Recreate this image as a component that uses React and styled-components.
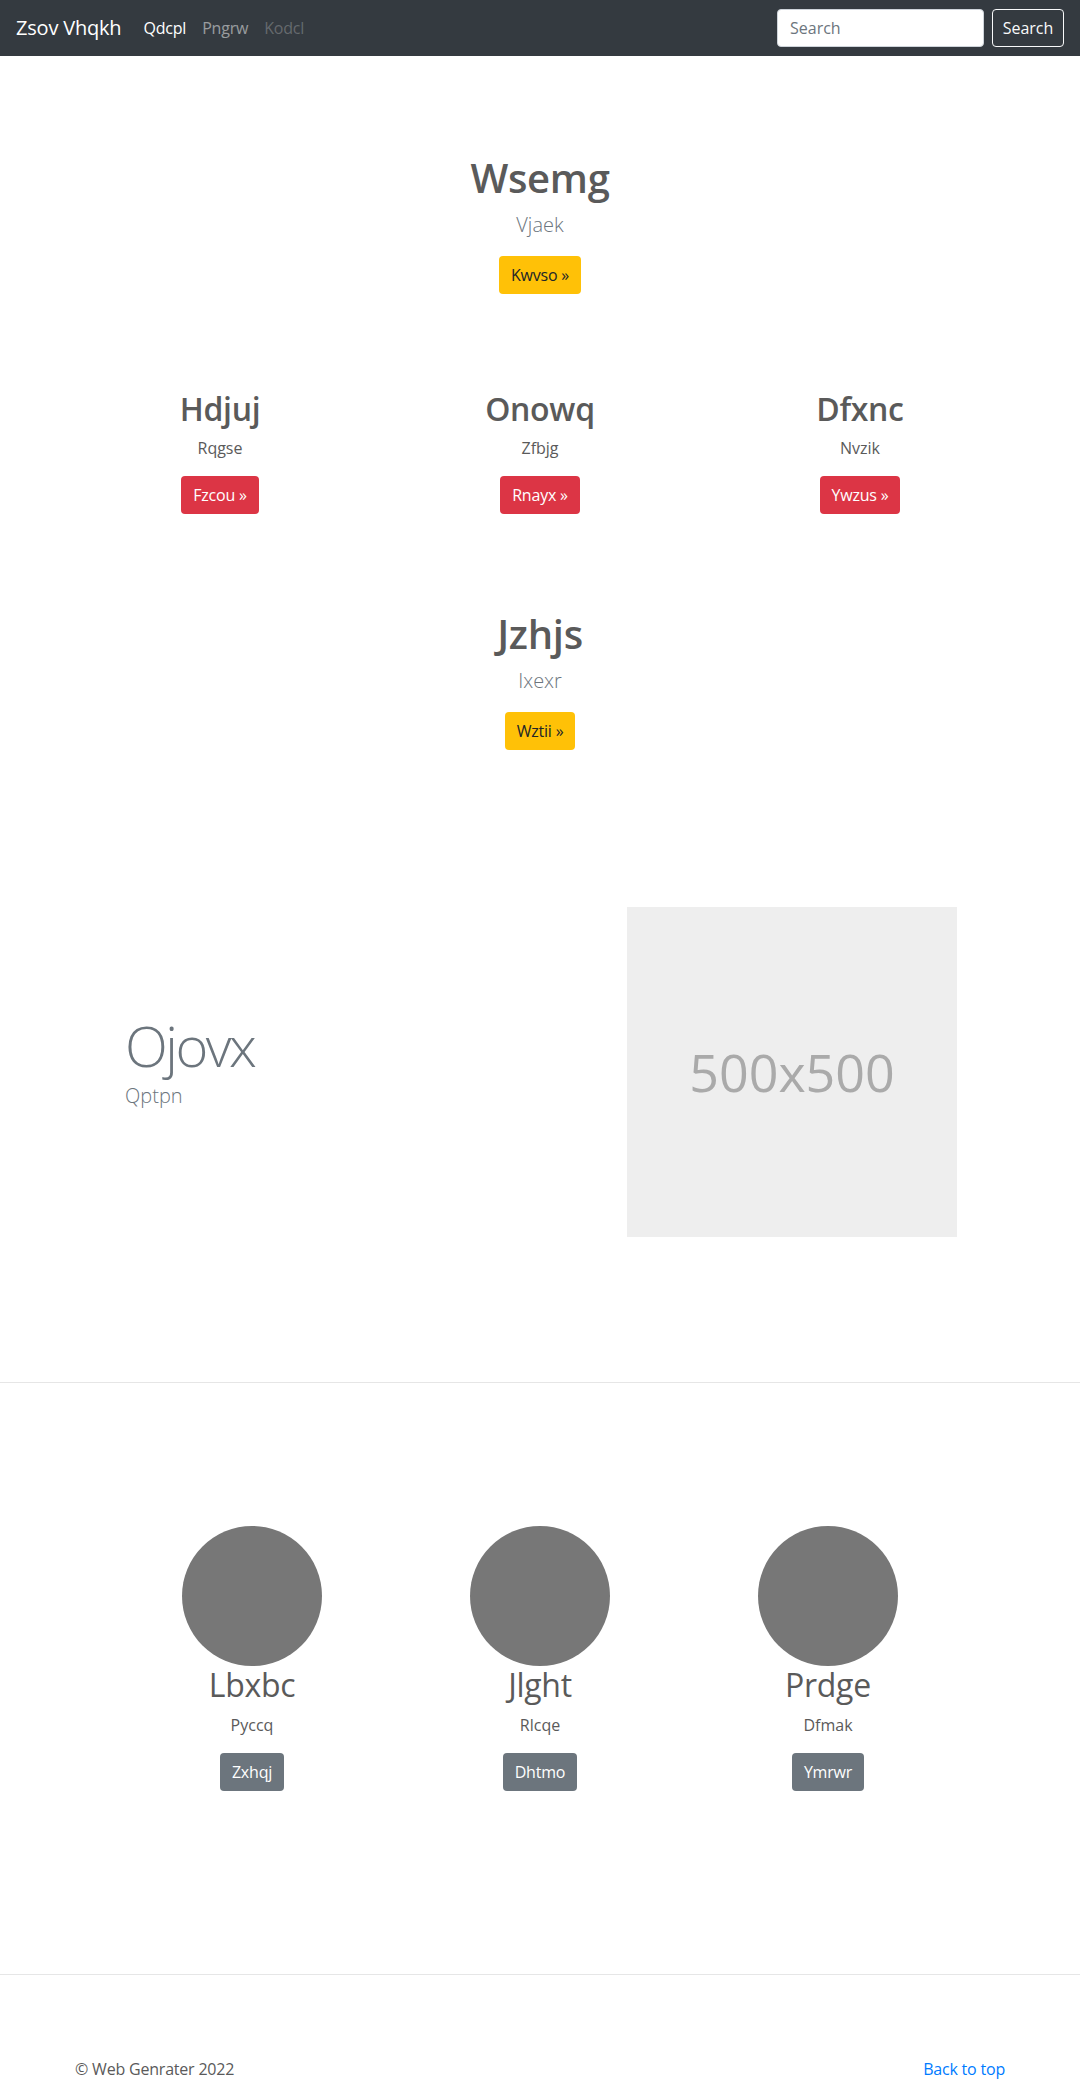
import React from 'react'
import styled, { createGlobalStyle } from 'styled-components'

const GlobalStyle = createGlobalStyle`
  * { box-sizing: border-box; }
  body {
    margin: 0;
    font-family: "Open Sans", "Noto Sans", sans-serif;
    font-size: 16px;
    line-height: 1.5;
    color: #5a5a5a;
    background: #fff;
  }
`

const Navbar = styled.nav`
  height: 56px;
  background-color: #343a40;
  display: flex;
  align-items: center;
  padding: 8px 16px;
`

const Brand = styled.a`
  font-size: 20px;
  line-height: 30px;
  color: #fff;
  margin-right: 14px;
  letter-spacing: -0.2px;
  text-decoration: none;
`

const NavLinks = styled.div`
  display: flex;
  flex: 1;
`

const NavLink = styled.a`
  padding: 8px;
  font-size: 16px;
  line-height: 24px;
  letter-spacing: -0.2px;
  text-decoration: none;
  color: ${(p) =>
    p.$state === 'active'
      ? '#fff'
      : p.$state === 'disabled'
      ? 'rgba(255,255,255,.25)'
      : 'rgba(255,255,255,.5)'};
`

const SearchForm = styled.form`
  display: flex;
  gap: 8px;
`

const SearchInput = styled.input`
  width: 207px;
  height: 38px;
  padding: 6px 12px;
  font-family: inherit;
  font-size: 16px;
  color: #495057;
  border: 1px solid #ced4da;
  border-radius: 4px;
  outline: none;
  &::placeholder { color: #6c757d; }
`

const OutlineButton = styled.button`
  height: 38px;
  width: 72px;
  padding: 6px 0;
  font-family: inherit;
  font-size: 16px;
  color: #f8f9fa;
  background: transparent;
  border: 1px solid #f8f9fa;
  border-radius: 4px;
`

const Main = styled.main`
  padding-top: 50px;
`

const Block = styled.section`
  padding: 48px 0;
  text-align: center;
`

const Container = styled.div`
  width: 960px;
  margin: 0 auto;
  padding: 0 ${(p) => p.$pad ?? 15}px;
`

const Heading = styled.h1`
  margin: 0 0 8px;
  font-size: ${(p) => p.$size || 40}px;
  font-weight: ${(p) => p.$weight || 600};
  line-height: 1.2;
  letter-spacing: -0.3px;
  color: #5a5a5a;
`

const Lead = styled.p`
  margin: 0 0 16px;
  font-size: 20px;
  font-weight: 300;
  color: #6c757d;
`

const Text = styled.p`
  margin: 0 0 16px;
`

const variants = {
  warning: { bg: '#ffc107', fg: '#212529' },
  danger: { bg: '#dc3545', fg: '#fff' },
  secondary: { bg: '#6c757d', fg: '#fff' },
}

const Button = styled.a`
  display: inline-block;
  padding: 7px 12px;
  font-size: 16px;
  line-height: 24px;
  letter-spacing: -0.2px;
  border-radius: 4px;
  text-decoration: none;
  background-color: ${(p) => variants[p.$variant].bg};
  color: ${(p) => variants[p.$variant].fg};
`

const ThreeCols = styled.div`
  display: grid;
  grid-template-columns: repeat(3, 1fr);
`

const Col = styled.div`
  text-align: center;
`

const Featurette = styled.section`
  padding: 109px 0 145px;
`

const FeatRow = styled.div`
  display: grid;
  grid-template-columns: 560px 400px;
  align-items: center;
`

const FeatText = styled.div`
  padding-left: 65px;
`

const FeatHeading = styled.h2`
  margin: 0 0 8px;
  font-size: 56px;
  font-weight: 300;
  line-height: 1;
  letter-spacing: -2.5px;
  color: #6c757d;
`

const FeatMedia = styled.div`
  padding-left: 7px;
`

const Placeholder = styled.div`
  width: 330px;
  height: 330px;
  background-color: #eee;
  color: #aaa;
  font-size: 52px;
  display: flex;
  align-items: center;
  justify-content: center;
`

const Divider = styled.hr`
  margin: 0;
  border: 0;
  border-top: 1px solid #e6e6e6;
`

const Team = styled.section`
  padding: 143px 0 183px;
`

const Avatar = styled.div`
  width: 140px;
  height: 140px;
  border-radius: 50%;
  background-color: #777;
  margin: 0 auto;
`

const Footer = styled.footer`
  padding-top: 82px;
`

const FooterRow = styled.div`
  display: flex;
  justify-content: space-between;
  letter-spacing: -0.2px;
`

const BackLink = styled.a`
  color: #007bff;
  text-decoration: none;
`

const cols = [
  { title: 'Hdjuj', text: 'Rqgse', btn: 'Fzcou »' },
  { title: 'Onowq', text: 'Zfbjg', btn: 'Rnayx »' },
  { title: 'Dfxnc', text: 'Nvzik', btn: 'Ywzus »' },
]

const people = [
  { name: 'Lbxbc', text: 'Pyccq', btn: 'Zxhqj' },
  { name: 'Jlght', text: 'Rlcqe', btn: 'Dhtmo' },
  { name: 'Prdge', text: 'Dfmak', btn: 'Ymrwr' },
]

export default function App() {
  return (
    <>
      <GlobalStyle />
      <Navbar>
        <Brand href="#">Zsov Vhqkh</Brand>
        <NavLinks>
          <NavLink href="#" $state="active">Qdcpl</NavLink>
          <NavLink href="#">Pngrw</NavLink>
          <NavLink $state="disabled">Kodcl</NavLink>
        </NavLinks>
        <SearchForm onSubmit={(e) => e.preventDefault()}>
          <SearchInput type="text" placeholder="Search" />
          <OutlineButton type="submit">Search</OutlineButton>
        </SearchForm>
      </Navbar>

      <Main>
        <Block>
          <Heading>Wsemg</Heading>
          <Lead>Vjaek</Lead>
          <Button href="#" $variant="warning">Kwvso »</Button>
        </Block>

        <Block>
          <Container $pad={0}>
            <ThreeCols>
              {cols.map((c) => (
                <Col key={c.title}>
                  <Heading as="h2" $size={32}>{c.title}</Heading>
                  <Text>{c.text}</Text>
                  <Button href="#" $variant="danger">{c.btn}</Button>
                </Col>
              ))}
            </ThreeCols>
          </Container>
        </Block>

        <Block>
          <Heading>Jzhjs</Heading>
          <Lead>Ixexr</Lead>
          <Button href="#" $variant="warning">Wztii »</Button>
        </Block>

        <Featurette>
          <Container $pad={0}>
            <FeatRow>
              <FeatText>
                <FeatHeading>Ojovx</FeatHeading>
                <Lead>Qptpn</Lead>
              </FeatText>
              <FeatMedia>
                <Placeholder>500x500</Placeholder>
              </FeatMedia>
            </FeatRow>
          </Container>
        </Featurette>

        <Divider />

        <Team>
          <Container $pad={48}>
            <ThreeCols>
              {people.map((p) => (
                <Col key={p.name}>
                  <Avatar />
                  <Heading as="h2" $size={32} $weight={400}>{p.name}</Heading>
                  <Text>{p.text}</Text>
                  <Button href="#" $variant="secondary">{p.btn}</Button>
                </Col>
              ))}
            </ThreeCols>
          </Container>
        </Team>

        <Divider />

        <Footer>
          <Container>
            <FooterRow>
              <span>© Web Genrater 2022</span>
              <BackLink href="#">Back to top</BackLink>
            </FooterRow>
          </Container>
        </Footer>
      </Main>
    </>
  )
}
